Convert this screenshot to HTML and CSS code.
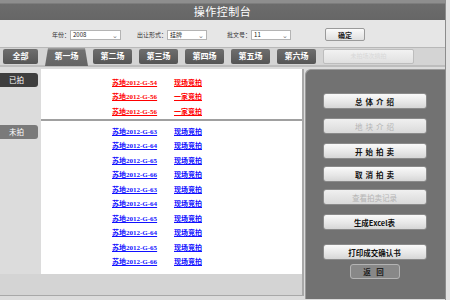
FILE: index.html
```html
<!DOCTYPE html>
<html lang="zh-CN">
<head>
    <meta charset="UTF-8">
    <title>操作控制台</title>
    <link rel="stylesheet" href="styles.css">
</head>
<body>
    <div class="page">
        <div class="header">操作控制台</div>

        <div class="filter">
            <label class="field f-year">年份：<span class="select w50">2008<i>⌄</i></span></label>
            <label class="field f-type">出让形式：<span class="select w40">挂牌<i>⌄</i></span></label>
            <label class="field f-doc">批文号：<span class="select w40">11<i>⌄</i></span></label>
            <button class="ok">确定</button>
        </div>

        <div class="tabs">
            <span class="tab all">全部</span>
            <span class="tab active">第一场</span>
            <span class="tab">第二场</span>
            <span class="tab">第三场</span>
            <span class="tab">第四场</span>
            <span class="tab">第五场</span>
            <span class="tab">第六场</span>
            <span class="tab disabled">未拍场次摘拍</span>
        </div>

        <div class="main">
            <div class="left">
                <div class="board">
                    <div class="side">
                        <div class="badge done">已拍</div>
                        <div class="badge todo">未拍</div>
                    </div>
                    <div class="content">
                        <div class="section sold">
                            <div class="row"><a>苏地2012-G-54</a><a>现场竞拍</a></div>
                            <div class="row"><a>苏地2012-G-56</a><a>一家竞拍</a></div>
                            <div class="row"><a>苏地2012-G-56</a><a>一家竞拍</a></div>
                        </div>
                        <div class="section open">
                            <div class="row"><a>苏地2012-G-63</a><a>现场竞拍</a></div>
                            <div class="row"><a>苏地2012-G-64</a><a>现场竞拍</a></div>
                            <div class="row"><a>苏地2012-G-65</a><a>现场竞拍</a></div>
                            <div class="row"><a>苏地2012-G-66</a><a>现场竞拍</a></div>
                            <div class="row"><a>苏地2012-G-63</a><a>现场竞拍</a></div>
                            <div class="row"><a>苏地2012-G-64</a><a>现场竞拍</a></div>
                            <div class="row"><a>苏地2012-G-65</a><a>现场竞拍</a></div>
                            <div class="row"><a>苏地2012-G-64</a><a>现场竞拍</a></div>
                            <div class="row"><a>苏地2012-G-65</a><a>现场竞拍</a></div>
                            <div class="row"><a>苏地2012-G-66</a><a>现场竞拍</a></div>
                        </div>
                    </div>
                </div>
                <div class="footer"></div>
            </div>

            <div class="panel">
                <button class="btn b1 spaced">总体介绍</button>
                <button class="btn b2 spaced off">地块介绍</button>
                <button class="btn b3 spaced">开始拍卖</button>
                <button class="btn b4 spaced">取消拍卖</button>
                <button class="btn b5 off">查看拍卖记录</button>
                <button class="btn b6">生成Excel表</button>
                <button class="btn b7">打印成交确认书</button>
                <button class="back">返 回</button>
            </div>
        </div>
    </div>
</body>
</html>
```

FILE: styles.css
```css
* {
    box-sizing: border-box;
}
body {
    margin: 0;
    width: 450px;
    height: 300px;
    overflow: hidden;
    background: #e2e2e2;
    font-family: "Liberation Serif", "Noto Sans CJK SC", serif;
}
.page {
    width: 446px;
    height: 300px;
    border-right: 1px solid #8c8c8c;
    background: #dcdcdc;
}
.header {
    height: 20px;
    background: linear-gradient(#8e8e8e 0, #8e8e8e 3px, #6c6c6c 4px, #666 100%);
    color: #fff;
    font-family: "Noto Sans CJK SC", sans-serif;
    font-size: 11px;
    line-height: 22px;
    text-align: center;
    letter-spacing: 0.5px;
}
.filter {
    height: 28px;
    background: #e6e6e6;
    border-bottom: 1px solid #b8b8b8;
    display: flex;
    align-items: center;
    font-family: "Noto Sans CJK SC", sans-serif;
    font-size: 6px;
    color: #333;
    padding-top: 2px;
}
.field {
    display: flex;
    align-items: center;
}
.f-year { margin-left: 52px; }
.f-type { margin-left: 16px; }
.f-doc { margin-left: 20px; }
.select {
    height: 10px;
    background: #fff;
    border: 1px solid #b4b4b4;
    display: flex;
    align-items: center;
    justify-content: space-between;
    padding: 0 2px;
    font-size: 6px;
    color: #222;
}
.select i {
    font-style: normal;
    color: #777;
    font-size: 7px;
    line-height: 4px;
}
.w50 { width: 51px; }
.w40 { width: 40px; }
.ok {
    margin-left: 34px;
    width: 40px;
    height: 13px;
    padding: 0;
    border: 1px solid #9a9a9a;
    border-radius: 2px;
    background: linear-gradient(#fafafa, #e0e0e0);
    font-family: "Noto Sans CJK SC", sans-serif;
    font-size: 7px;
    font-weight: bold;
    color: #222;
}
.tabs {
    height: 19px;
    background: #d4d4d4;
    border-bottom: 2px solid #bdbdbd;
    display: flex;
    align-items: flex-start;
    padding-top: 1px;
}
.tab {
    height: 15px;
    width: 39px;
    margin-right: 7px;
    background: linear-gradient(#6e6e6e, #555);
    border-radius: 2px;
    color: #fff;
    font-size: 8px;
    font-weight: bold;
    text-align: center;
    line-height: 15px;
}
.tab.all {
    margin-left: 3px;
    width: 35px;
}
.tab.active {
    width: 43px;
    height: 18px;
    margin-right: 5px;
    margin-top: -1px;
    border-radius: 0;
    line-height: 18px;
    background: linear-gradient(#9a9a9a 0, #9a9a9a 1px, #707070 2px, #646464);
    clip-path: polygon(3px 0, 40px 0, 43px 100%, 0 100%);
}
.tab.disabled {
    width: 91px;
    background: linear-gradient(#f2f2f2, #e0e0e0);
    border: 1px solid #bdbdbd;
    color: #d8d8d8;
    font-size: 6px;
    font-weight: normal;
    line-height: 13px;
}
.main {
    display: flex;
    height: 232px;
}
.left {
    width: 304px;
    display: flex;
    flex-direction: column;
}
.board {
    display: flex;
    margin-top: 2px;
    height: 205px;
}
.side {
    width: 41px;
    background: #dcdcdc;
}
.badge {
    width: 38px;
    height: 14px;
    border-radius: 0 3px 3px 0;
    color: #fff;
    font-family: "Noto Sans CJK SC", sans-serif;
    font-size: 7.5px;
    line-height: 14px;
    padding-left: 9px;
}
.badge.done {
    margin-top: 4px;
    background: #3e3e3e;
}
.badge.todo {
    margin-top: 38px;
    background: #7a7a7a;
}
.content {
    flex: 1;
    background: #fff;
    border-right: 2px solid #a8a8a8;
}
.section {
    padding-left: 71px;
}
.sold {
    height: 52px;
    padding-top: 5.5px;
    border-bottom: 2px solid #a0a0a0;
}
.open {
    padding-top: 2.5px;
}
.row {
    height: 14.5px;
    display: flex;
    align-items: center;
    font-size: 7px;
    font-weight: bold;
}
.row a {
    text-decoration: underline;
}
.row a:first-child {
    width: 62px;
}
.sold a {
    color: #f00;
}
.open a {
    color: #1010ff;
}
.footer {
    flex: 1;
    background: #d4d4d4;
    border-right: 2px solid #a8a8a8;
    border-bottom: 1px solid #a8a8a8;
    margin-bottom: 3px;
}
.panel {
    flex: 1;
    margin-top: 2px;
    margin-left: 1px;
    background: #727272;
    border-left: 1px solid #9a9a9a;
    border-top: 1px solid #9a9a9a;
    border-radius: 6px 0 0 0;
    display: flex;
    flex-direction: column;
    align-items: center;
    padding-top: 23px;
    padding-right: 2px;
}
.btn {
    width: 104px;
    height: 16px;
    padding: 0;
    border: 1px solid #8a8a8a;
    border-radius: 3px;
    background: linear-gradient(#fafafa, #e6e6e6 60%, #d6d6d6);
    font-family: "Noto Sans CJK SC", sans-serif;
    font-size: 7.5px;
    font-weight: bold;
    color: #111;
}
.btn.spaced {
    letter-spacing: 3px;
    padding-left: 3px;
}
.btn.off {
    color: #b4b4b4;
    font-weight: normal;
    background: linear-gradient(#f0f0f0, #dadada);
}
.b2 { margin-top: 9px; }
.b3 { margin-top: 9px; }
.b4 { margin-top: 7px; }
.b5 { margin-top: 7px; }
.b6 { margin-top: 9px; }
.b7 { margin-top: 14px; }
.back {
    margin-top: 4px;
    width: 50px;
    height: 15px;
    padding: 0;
    border: 1px solid #b4b4b4;
    border-radius: 3px;
    background: #888;
    font-family: "Noto Sans CJK SC", sans-serif;
    font-size: 7.5px;
    font-weight: bold;
    color: #222;
    letter-spacing: 2px;
}
```
